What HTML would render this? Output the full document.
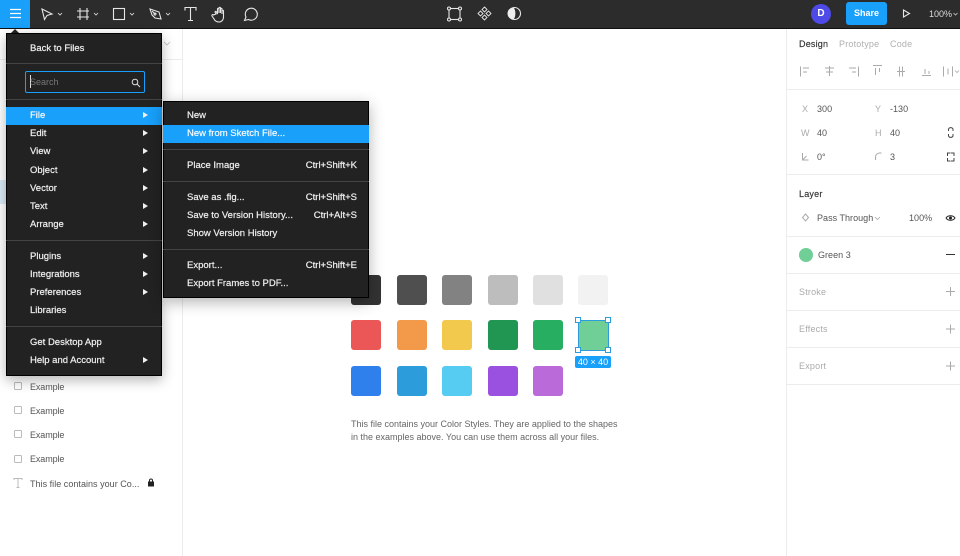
<!DOCTYPE html>
<html><head><meta charset="utf-8"><style>
html,body{margin:0;padding:0;background:#fff}
body{width:960px;height:556px;position:relative;overflow:hidden;font-family:"Liberation Sans",sans-serif;font-size:10px;color:#333;filter:blur(.25px)}
.a{position:absolute}
.t{position:absolute;white-space:nowrap;line-height:12px}
.m{color:#f0f0f0;font-size:9.5px;-webkit-text-stroke:.2px #f0f0f0}
.g{color:#555;font-size:9px;letter-spacing:.03px}
.l{color:#aaa;font-size:9px;letter-spacing:.2px}
.sw{position:absolute;width:30px;height:30px;border-radius:3px}
.hl{position:absolute;background:#18a0fb}
.sep{position:absolute;height:1px;background:#444}
.arr{position:absolute;width:0;height:0;border-left:5px solid #f0f0f0;border-top:3.5px solid transparent;border-bottom:3.5px solid transparent;left:143px}
.div{position:absolute;left:787px;right:0;height:1px;background:#ececec}
svg{position:absolute;overflow:visible}
</style></head><body>

<!-- top bar -->
<div class="a" style="left:0;top:0;width:960px;height:28px;background:#2c2c2c;border-bottom:1px solid #111"></div>
<div class="a" style="left:0;top:0;width:30px;height:28px;background:#18a0fb"></div>
<svg style="left:0;top:0" width="960" height="28" fill="none" stroke="#e6e6e6" stroke-width="1.1">
<path d="M10 9.500h11M10 13.500h11M10 17.500h11" stroke="#fff" stroke-width="1.200"/>
<path d="M42 9l10 5-5 1.500-2.500 4z"/><path d="M58 13l2 2 2-2" stroke-width=".8"/>
<path d="M80 8v12M87 8v12M77 11h12M77 17h12"/><path d="M94 13l2 2 2-2" stroke-width=".8"/>
<rect x="113.500" y="8.500" width="11" height="11"/><path d="M130 13l2 2 2-2" stroke-width=".8"/>
<path d="M150 9l9 3 2 7-6-1-3-3zM152 11l3 3"/><circle cx="155" cy="14" r="1"/><path d="M166 13l2 2 2-2" stroke-width=".8"/>
<path d="M185 10.500v-3h11v3M190.500 7.500v13M188 20.500h5"/>
<path d="M216 14l-1-2c0-1 1-1 1.500 0l1 2v-5c0-1 1.500-1 1.500 0v4-5c0-1 1.500-1 1.500 0v5-4c0-1 1.500-1 1.500 0v5-3c0-1 1.500-1 1.500 0v6c0 3-2 5-4.500 5s-4-1-5-3l-2-3c-.500-1 .500-2 1.500-1z"/>
<path d="M244.500 20.500l1.500-3.500a6 6 0 1 1 2.500 2.500z"/>
<rect x="449" y="8.500" width="11" height="11"/><g fill="#2c2c2c"><circle cx="449" cy="8.500" r="1.500"/><circle cx="460" cy="8.500" r="1.500"/><circle cx="449" cy="19.500" r="1.500"/><circle cx="460" cy="19.500" r="1.500"/></g>
<g stroke-width=".9"><path d="M484.500 7l2.500 2.500-2.500 2.500-2.500-2.500zM484.500 15l2.500 2.500-2.500 2.500-2.500-2.500zM480.500 11l2.500 2.500-2.500 2.500-2.500-2.500zM488.500 11l2.500 2.500-2.500 2.500-2.500-2.500z"/></g>
<circle cx="514.500" cy="13.500" r="6"/><path d="M513.500 7.500a6 6 0 0 0 0 12c2.500-2.500 2.500-9.500 0-12z" fill="#eee" stroke="none"/>
<path d="M903.500 10l6 3.500-6 3.500z"/>
</svg>
<div class="a" style="left:811px;top:4px;width:20px;height:20px;border-radius:50%;background:#4d4ae8;color:#fff;font-size:10px;line-height:19px;text-align:center;font-weight:bold">D</div>
<div class="a" style="left:846px;top:2px;width:41px;height:23px;border-radius:3px;background:#18a0fb;color:#fff;font-size:9px;font-weight:bold;line-height:23px;text-align:center">Share</div>
<div class="t" style="left:929px;top:8px;color:#ddd;font-size:9px">100%</div>
<svg style="left:0;top:0" width="960" height="28" fill="none" stroke="#ccc" stroke-width=".8"><path d="M953.500 13l2 2 2-2"/></svg>

<!-- left panel -->
<div class="a" style="left:182px;top:29px;width:1px;height:527px;background:#ececec"></div>
<div class="a" style="left:0;top:59px;width:182px;height:1px;background:#ececec"></div>
<div class="a" style="left:0;top:180px;width:6px;height:24px;background:#daebf7"></div>
<svg style="left:163px;top:40px" width="10" height="8" fill="none" stroke="#bbb" stroke-width=".8"><path d="M1 2l3 3 3-3"/></svg>
<svg style="left:0;top:0" width="182" height="556" fill="none" stroke="#bbb" stroke-width="1">
<rect x="14.500" y="382.500" width="7" height="7" rx="1"/>
<rect x="14.500" y="406.500" width="7" height="7" rx="1"/>
<rect x="14.500" y="430.500" width="7" height="7" rx="1"/>
<rect x="14.500" y="455.500" width="7" height="7" rx="1"/>
<path d="M14 480v-1.500h8v1.500M18 478.500v9M16.500 487.500h3"/>
<rect x="148" y="481.500" width="6" height="5" fill="#222" stroke="none"/><path d="M149.500 481.500v-1a1.500 1.500 0 0 1 3 0v1" stroke="#222"/>
</svg>
<div class="t g" style="left:30px;top:381px;letter-spacing:-.1px">Example</div>
<div class="t g" style="left:30px;top:405px;letter-spacing:-.1px">Example</div>
<div class="t g" style="left:30px;top:429px;letter-spacing:-.1px">Example</div>
<div class="t g" style="left:30px;top:453px;letter-spacing:-.1px">Example</div>
<div class="t g" style="left:30px;top:478px">This file contains your Co...</div>

<!-- canvas swatches -->
<div class="sw" style="left:351px;top:275px;background:#333"></div>
<div class="sw" style="left:397px;top:275px;background:#4f4f4f"></div>
<div class="sw" style="left:442px;top:275px;background:#828282"></div>
<div class="sw" style="left:488px;top:275px;background:#bdbdbd"></div>
<div class="sw" style="left:533px;top:275px;background:#e0e0e0"></div>
<div class="sw" style="left:578px;top:275px;background:#f2f2f2"></div>
<div class="sw" style="left:351px;top:320px;background:#eb5757"></div>
<div class="sw" style="left:397px;top:320px;background:#f2994a"></div>
<div class="sw" style="left:442px;top:320px;background:#f2c94c"></div>
<div class="sw" style="left:488px;top:320px;background:#219653"></div>
<div class="sw" style="left:533px;top:320px;background:#27ae60"></div>
<div class="a" style="left:578px;top:320px;width:29px;height:29px;background:#6fcf97;border:1px solid #2d9cdb"></div>
<div class="a" style="left:575px;top:317px;width:4px;height:4px;background:#fff;border:1px solid #2d9cdb"></div>
<div class="a" style="left:605px;top:317px;width:4px;height:4px;background:#fff;border:1px solid #2d9cdb"></div>
<div class="a" style="left:575px;top:347px;width:4px;height:4px;background:#fff;border:1px solid #2d9cdb"></div>
<div class="a" style="left:605px;top:347px;width:4px;height:4px;background:#fff;border:1px solid #2d9cdb"></div>
<div class="a" style="left:575px;top:356px;width:36px;height:12px;border-radius:2px;background:#18a0fb;color:#fff;font-size:9px;line-height:12px;text-align:center">40 × 40</div>
<div class="sw" style="left:351px;top:366px;background:#2f80ed"></div>
<div class="sw" style="left:397px;top:366px;background:#2d9cdb"></div>
<div class="sw" style="left:442px;top:366px;background:#56ccf2"></div>
<div class="sw" style="left:488px;top:366px;background:#9b51e0"></div>
<div class="sw" style="left:533px;top:366px;background:#bb6bd9"></div>
<div class="t" style="left:351px;top:418px;color:#666;font-size:9px">This file contains your Color Styles. They are applied to the shapes</div>
<div class="t" style="left:351px;top:431px;color:#666;font-size:9px">in the examples above. You can use them across all your files.</div>

<!-- right panel -->
<div class="a" style="left:786px;top:29px;width:1px;height:527px;background:#ececec"></div>
<div class="t" style="left:799px;top:38px;color:#333;font-size:9px;letter-spacing:.2px;-webkit-text-stroke:.15px #333">Design</div>
<div class="t l" style="left:839px;top:38px;color:#b0b0b0">Prototype</div>
<div class="t l" style="left:890px;top:38px;color:#b0b0b0">Code</div>
<svg style="left:787px;top:60px" width="173" height="24" fill="none" stroke="#aaa" stroke-width="1">
<path d="M13.500 6.500v10M16 8h6M16 12h4"/>
<path d="M42.500 6v10M38 8h9M39 12h7"/>
<path d="M71.500 6.500v10M62 8h7M65 12h4"/>
<path d="M86 5.500h9M88.500 8v7M92.500 8v4"/>
<path d="M112.500 6.500v10M115.500 6.500v10M110 11.500h8"/>
<path d="M135 15.500h9M138 9v5M142 11v3"/>
<path d="M156.500 6.500v10M165.500 6.500v10M161 8.500v6"/>
<path d="M168 10.500l2 2 2-2" stroke-width=".8"/>
</svg>
<div class="div" style="top:89px"></div>
<div class="t l" style="left:802px;top:103px">X</div><div class="t g" style="left:817px;top:103px">300</div>
<div class="t l" style="left:875px;top:103px">Y</div><div class="t g" style="left:890px;top:103px">-130</div>
<div class="t l" style="left:801px;top:127px">W</div><div class="t g" style="left:817px;top:127px">40</div>
<div class="t l" style="left:875px;top:127px">H</div><div class="t g" style="left:890px;top:127px">40</div>
<div class="t g" style="left:817px;top:151px">0°</div><div class="t g" style="left:890px;top:151px">3</div>
<svg style="left:787px;top:100px" width="173" height="70" fill="none" stroke="#aaa" stroke-width="1">
<path d="M15.500 53v7h6M15.500 60l4-4"/>
<path d="M88.500 60v-3a4 4 0 0 1 4-4h2"/>
<g stroke="#444"><path d="M161.500 29a2.500 2.500 0 0 1 4.500 0v2M161.500 36a2.500 2.500 0 0 0 4.500 0v-2M161.500 29v2M161.500 36v-2"/>
<path d="M160.500 56v-3h3M164 53h3v3M167 58v3h-3M163.500 61h-3v-3"/></g>
</svg>
<div class="div" style="top:174px"></div>
<div class="t" style="left:799px;top:188px;color:#333;font-size:9px;letter-spacing:.2px;-webkit-text-stroke:.15px #333">Layer</div>
<svg style="left:787px;top:200px" width="173" height="36" fill="none" stroke="#aaa" stroke-width="1">
<path d="M18.500 14l3 3.500-3 3.500-3-3.500z"/><path d="M88 17l2.500 2.500 2.500-2.500" stroke-width=".8"/>
<path d="M159 18c2-3 7-3 9 0-2 3-7 3-9 0z" stroke="#222"/><circle cx="163.500" cy="18" r="1.500" fill="#222" stroke="none"/>
</svg>
<div class="t g" style="left:817px;top:212px">Pass Through</div>
<div class="t g" style="left:909px;top:212px">100%</div>
<div class="div" style="top:236px"></div>
<div class="a" style="left:799px;top:248px;width:14px;height:14px;border-radius:50%;background:#6fcf97"></div>
<div class="t g" style="left:818px;top:249px">Green 3</div>
<div class="a" style="left:946px;top:254px;width:9px;height:1px;background:#333"></div>
<div class="div" style="top:273px"></div>
<div class="t l" style="left:799px;top:286px">Stroke</div>
<div class="div" style="top:310px"></div>
<div class="t l" style="left:799px;top:323px">Effects</div>
<div class="div" style="top:347px"></div>
<div class="t l" style="left:799px;top:360px">Export</div>
<div class="div" style="top:384px"></div>
<svg style="left:787px;top:280px" width="173" height="95" fill="none" stroke="#aaa" stroke-width="1">
<path d="M163.500 7v9M159 11.500h9M163.500 44.500v9M159 49h9M163.500 81.500v9M159 86h9"/>
</svg>

<!-- main menu -->
<div class="a" style="left:6px;top:33px;width:156px;height:343px;background:#222;border:.5px solid #000;box-shadow:0 4px 12px rgba(0,0,0,.3);box-sizing:border-box"></div>
<div class="a" style="left:11px;top:29px;width:0;height:0;border-left:4px solid transparent;border-right:4px solid transparent;border-bottom:4px solid #222"></div>
<div class="sep" style="left:6px;width:156px;top:63px"></div>
<div class="sep" style="left:6px;width:156px;top:99px"></div>
<div class="sep" style="left:6px;width:156px;top:240px"></div>
<div class="sep" style="left:6px;width:156px;top:326px"></div>
<div class="a" style="left:24.500px;top:71px;width:120px;height:22px;border:1.5px solid #18a0fb;box-sizing:border-box;border-radius:2px"></div>
<div class="a" style="left:30px;top:75px;width:1px;height:13px;background:#ddd"></div>
<div class="t" style="left:30px;top:76px;color:#777;font-size:9px">Search</div>
<svg style="left:130px;top:77px" width="12" height="12" fill="none" stroke="#ddd" stroke-width="1"><circle cx="5" cy="5" r="2.800"/><path d="M7 7l3 3"/></svg>
<div class="hl" style="left:6px;top:107px;width:156px;height:18px"></div>

<div class="t m" style="left:30px;top:43px">Back to Files</div>
<div class="t m" style="left:30px;top:110px;color:#fff">File</div><div class="arr" style="top:112px"></div>
<div class="t m" style="left:30px;top:128px">Edit</div><div class="arr" style="top:130px"></div>
<div class="t m" style="left:30px;top:146px">View</div><div class="arr" style="top:148px"></div>
<div class="t m" style="left:30px;top:165px">Object</div><div class="arr" style="top:167px"></div>
<div class="t m" style="left:30px;top:183px">Vector</div><div class="arr" style="top:185px"></div>
<div class="t m" style="left:30px;top:201px">Text</div><div class="arr" style="top:203px"></div>
<div class="t m" style="left:30px;top:219px">Arrange</div><div class="arr" style="top:221px"></div>
<div class="t m" style="left:30px;top:251px">Plugins</div><div class="arr" style="top:253px"></div>
<div class="t m" style="left:30px;top:269px">Integrations</div><div class="arr" style="top:271px"></div>
<div class="t m" style="left:30px;top:287px">Preferences</div><div class="arr" style="top:289px"></div>
<div class="t m" style="left:30px;top:305px">Libraries</div>
<div class="t m" style="left:30px;top:337px">Get Desktop App</div>
<div class="t m" style="left:30px;top:355px">Help and Account</div><div class="arr" style="top:357px"></div>

<!-- submenu -->
<div class="a" style="left:163px;top:101px;width:206px;height:197px;background:#222;border:.5px solid #000;box-shadow:0 4px 14px rgba(0,0,0,.3);box-sizing:border-box"></div>
<div class="hl" style="left:163px;top:125px;width:206px;height:18px"></div>
<div class="sep" style="left:163px;width:206px;top:149px"></div>
<div class="sep" style="left:163px;width:206px;top:181px"></div>
<div class="sep" style="left:163px;width:206px;top:249px"></div>
<div class="t m" style="left:187px;top:110px">New</div>
<div class="t m" style="left:187px;top:128px;color:#fff">New from Sketch File...</div>
<div class="t m" style="left:187px;top:160px">Place Image</div>
<div class="t m" style="right:603px;top:160px">Ctrl+Shift+K</div>
<div class="t m" style="left:187px;top:192px">Save as .fig...</div>
<div class="t m" style="right:603px;top:192px">Ctrl+Shift+S</div>
<div class="t m" style="left:187px;top:210px">Save to Version History...</div>
<div class="t m" style="right:603px;top:210px">Ctrl+Alt+S</div>
<div class="t m" style="left:187px;top:228px">Show Version History</div>
<div class="t m" style="left:187px;top:260px">Export...</div>
<div class="t m" style="right:603px;top:260px">Ctrl+Shift+E</div>
<div class="t m" style="left:187px;top:278px">Export Frames to PDF...</div>
</body></html>
